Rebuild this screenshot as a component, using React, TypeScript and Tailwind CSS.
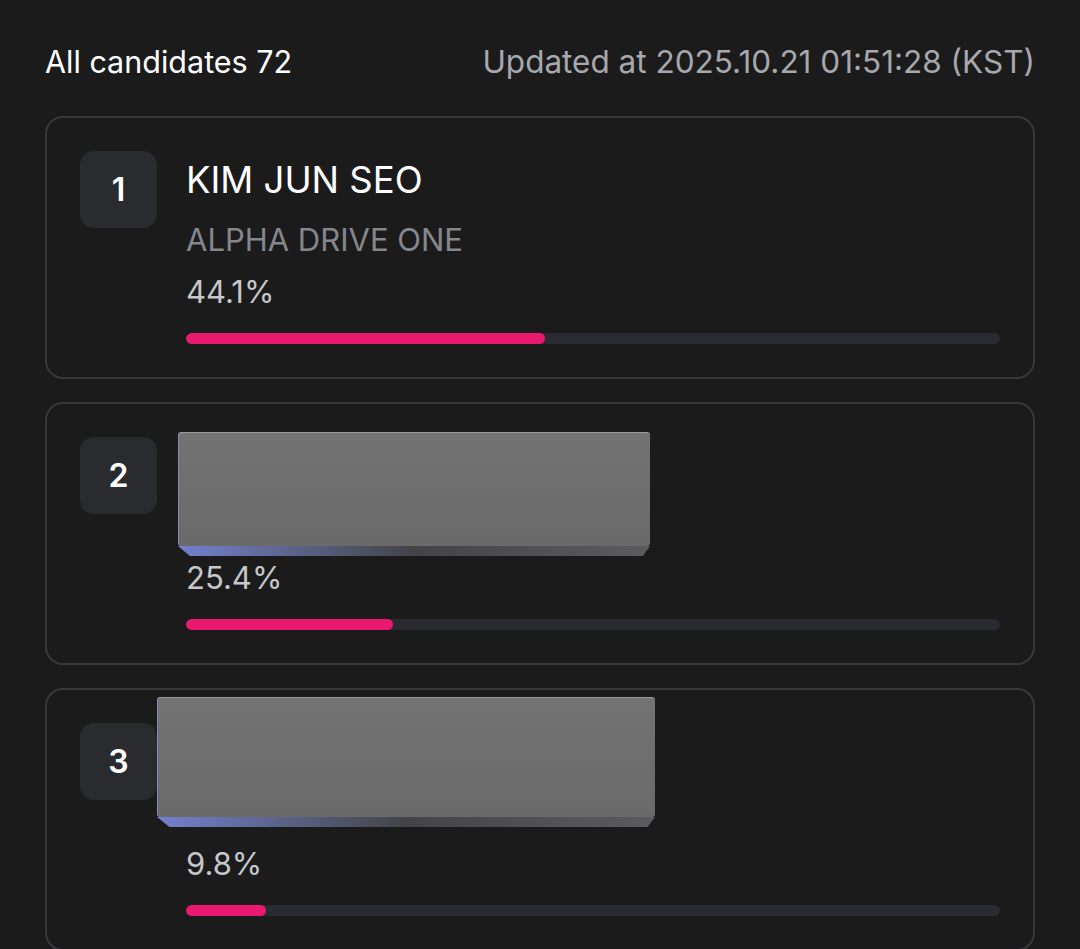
import React from "react";

type Candidate = {
  rank: number;
  name: string;
  team: string;
  percent: number;
  cover?: { left: number; top: number; width: number; face: number };
};

const candidates: Candidate[] = [
  { rank: 1, name: "KIM JUN SEO", team: "ALPHA DRIVE ONE", percent: 44.1 },
  {
    rank: 2,
    name: "PARK JI HOON",
    team: "ALPHA DRIVE ONE",
    percent: 25.4,
    cover: { left: 131, top: 28, width: 472, face: 114 },
  },
  {
    rank: 3,
    name: "LEE SEUNG MIN",
    team: "ALPHA DRIVE ONE",
    percent: 9.8,
    cover: { left: 110, top: 7, width: 498, face: 120 },
  },
];

function Cover({ cover }: { cover: NonNullable<Candidate["cover"]> }) {
  // grey block painted over the blurred-out name
  return (
    <div
      className="absolute flex flex-col"
      style={{ left: cover.left, top: cover.top, width: cover.width }}
    >
      <div
        className="rounded-[3px] border-t border-l border-t-[#9a9a9c] border-l-[#8088c8] bg-gradient-to-b from-[#737373] to-[#6a6a6a]"
        style={{ height: cover.face }}
      />
      <div className="h-[10px] bg-gradient-to-r from-[#7480d0] via-[#444446] to-[#5c5c5e] [clip-path:polygon(0_0,100%_0,98.5%_100%,2.5%_100%)]" />
    </div>
  );
}

function CandidateCard({ c }: { c: Candidate }) {
  return (
    <div className="relative flex gap-[29px] rounded-[18px] border-2 border-[#37383b] p-[33px]">
      <div className="flex h-[77px] w-[77px] shrink-0 items-center justify-center rounded-[14px] bg-[#2a2b2f] text-[32px] font-semibold text-white">
        {c.rank}
      </div>
      <div className="flex flex-1 flex-col">
        <div className="flex h-[58px] items-center text-[36.5px] text-white">
          {c.name}
        </div>
        <div className="flex h-[62px] items-center text-[31px] text-[#86878c]">
          {c.team}
        </div>
        <div className="flex h-[42px] items-center text-[31px] text-[#c6c7ca]">
          {c.percent}%
        </div>
        <div className="mt-[20px] h-[11px] w-full overflow-hidden rounded-full bg-[#2a2b30]">
          <div
            className="h-full rounded-full bg-[#e8196e]"
            style={{ width: `${c.percent}%` }}
          />
        </div>
      </div>
      {c.cover && <Cover cover={c.cover} />}
    </div>
  );
}

export default function App() {
  return (
    <div className="min-h-screen overflow-hidden bg-[#1b1b1c] px-[45px] pt-[40px] font-['Inter',sans-serif]">
      <div className="flex h-[44px] items-center justify-between">
        <div className="text-[30.5px] text-white">All candidates 72</div>
        <div className="text-[31.5px] text-[#a7a8ac]">
          Updated at 2025.10.21 01:51:28 (KST)
        </div>
      </div>
      <div className="mt-[32px] flex flex-col gap-[23px]">
        {candidates.map((c) => (
          <CandidateCard key={c.rank} c={c} />
        ))}
      </div>
    </div>
  );
}
